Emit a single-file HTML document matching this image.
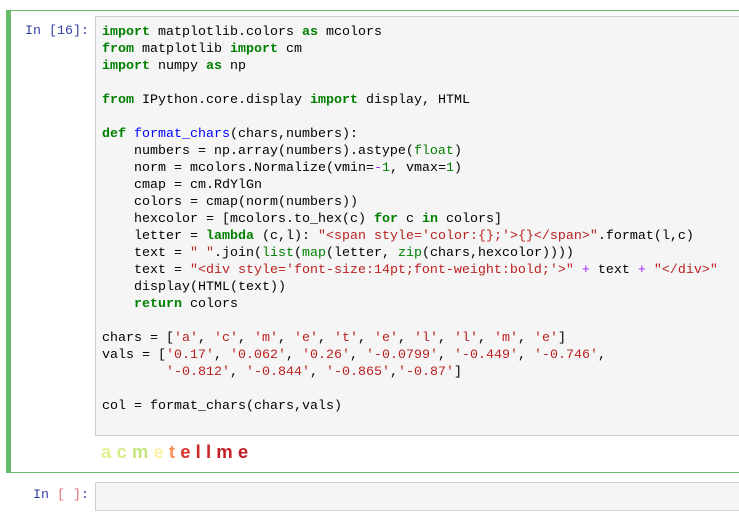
<!DOCTYPE html>
<html><head><meta charset="utf-8"><style>
body{margin:0;background:#fff;width:739px;height:521px;overflow:hidden;position:relative;font-family:"Liberation Mono",monospace}
.cell{position:absolute;left:6px;top:10px;width:760px;height:463px;border:1px solid #66bb6a;border-left:5px solid #66bb6a;box-sizing:border-box}
.inp{position:absolute;left:95px;top:16px;width:700px;height:420px;background:#f5f5f5;border:1px solid #cfcfcf;box-sizing:border-box}
pre{position:absolute;left:102px;top:24px;margin:0;font-family:"Liberation Mono",monospace;font-size:13.33px;line-height:17px;color:#000}
.p{position:absolute;font-size:13.33px;color:#303f9f;font-family:"Liberation Mono",monospace}
.k{color:#008000;font-weight:bold}.b{color:#008000}.s{color:#ba2121}.n{color:#008000}.f{color:#0000ff}.o{color:#aa22ff}
.out{position:absolute;left:101px;top:441px;font-family:"Liberation Sans",sans-serif;font-size:18.5px;font-weight:bold}
.inp2{position:absolute;left:95px;top:482px;width:700px;height:29px;background:#f5f5f5;border:1px solid #cfcfcf;box-sizing:border-box}
</style></head><body>
<div class="cell"></div>
<div class="p" style="left:25px;top:24px">In [16]:</div>
<div class="inp"></div>
<pre><span class="k">import</span> matplotlib.colors <span class="k">as</span> mcolors
<span class="k">from</span> matplotlib <span class="k">import</span> cm
<span class="k">import</span> numpy <span class="k">as</span> np

<span class="k">from</span> IPython.core.display <span class="k">import</span> display, HTML

<span class="k">def</span> <span class="f">format_chars</span>(chars,numbers):
    numbers = np.array(numbers).astype(<span class="b">float</span>)
    norm = mcolors.Normalize(vmin=<span class="o">-</span><span class="n">1</span>, vmax=<span class="n">1</span>)
    cmap = cm.RdYlGn
    colors = cmap(norm(numbers))
    hexcolor = [mcolors.to_hex(c) <span class="k">for</span> c <span class="k">in</span> colors]
    letter = <span class="k">lambda</span> (c,l): <span class="s">"&lt;span style='color:{};'&gt;{}&lt;/span&gt;"</span>.format(l,c)
    text = <span class="s">" "</span>.join(<span class="b">list</span>(<span class="b">map</span>(letter, <span class="b">zip</span>(chars,hexcolor))))
    text = <span class="s">"&lt;div style='font-size:14pt;font-weight:bold;'&gt;"</span> <span class="o">+</span> text <span class="o">+</span> <span class="s">"&lt;/div&gt;"</span>
    display(HTML(text))
    <span class="k">return</span> colors

chars = [<span class="s">'a'</span>, <span class="s">'c'</span>, <span class="s">'m'</span>, <span class="s">'e'</span>, <span class="s">'t'</span>, <span class="s">'e'</span>, <span class="s">'l'</span>, <span class="s">'l'</span>, <span class="s">'m'</span>, <span class="s">'e'</span>]
vals = [<span class="s">'0.17'</span>, <span class="s">'0.062'</span>, <span class="s">'0.26'</span>, <span class="s">'-0.0799'</span>, <span class="s">'-0.449'</span>, <span class="s">'-0.746'</span>,
        <span class="s">'-0.812'</span>, <span class="s">'-0.844'</span>, <span class="s">'-0.865'</span>,<span class="s">'-0.87'</span>]

col = format_chars(chars,vals)</pre>
<div class="out"><span style="color:#e0f391">a</span> <span style="color:#d6ee8a">c</span> <span style="color:#c3e67d">m</span> <span style="color:#fff1a6">e</span> <span style="color:#f99355">t</span> <span style="color:#d9352a">e</span> <span style="color:#cf2a27">l</span> <span style="color:#c92327">l</span> <span style="color:#c42026">m</span> <span style="color:#bf1d26">e</span></div>
<div class="p" style="left:33px;top:488px">In <span style="color:#e57373">[</span> <span style="color:#e57373">]</span>:</div>
<div class="inp2"></div>
</body></html>
